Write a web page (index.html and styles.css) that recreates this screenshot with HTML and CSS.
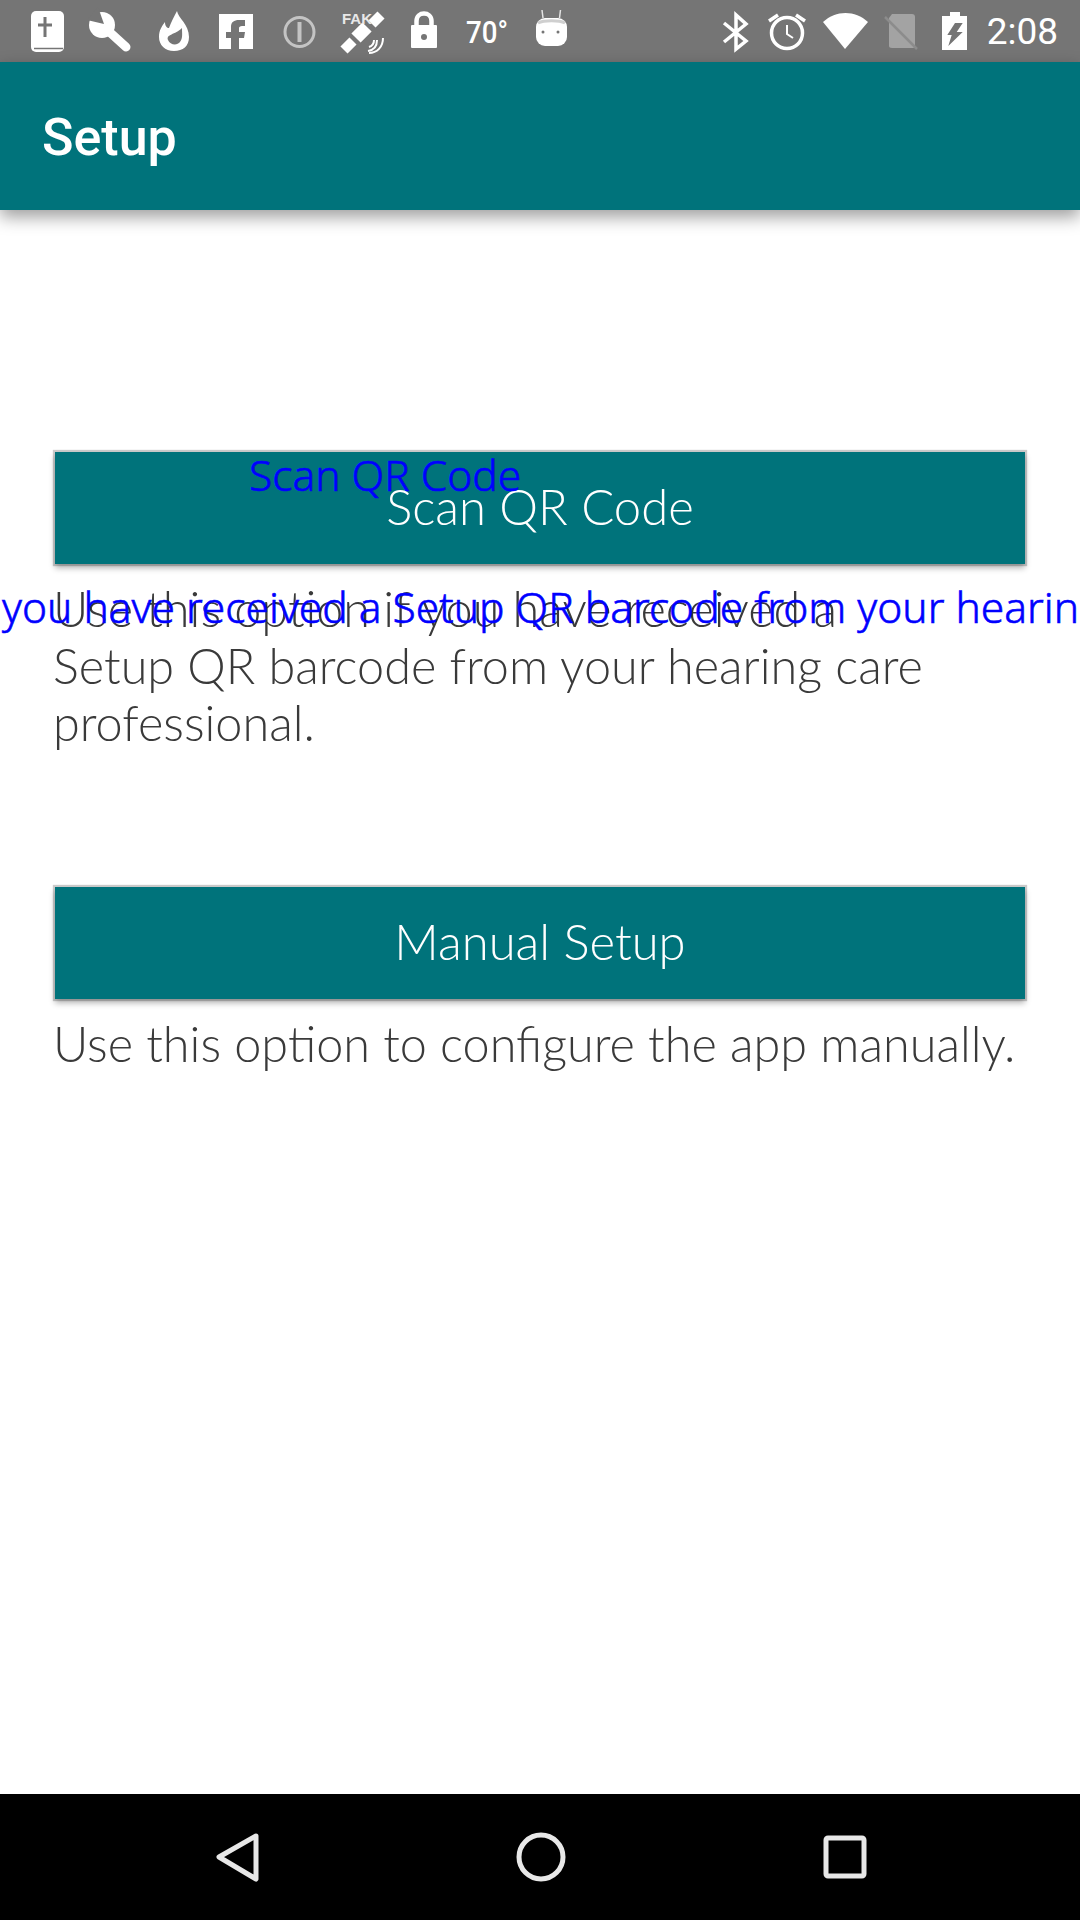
FILE: index.html
```html
<!DOCTYPE html>
<html>
	<head>
		<title>Setup</title>
		<link rel="stylesheet" href="styles.css">
	</head>
	<body>
		<div class="screen">
			<div class="statusbar">
				<div class="status-left">
					<!-- bible -->
					<svg class="icon" viewBox="0 0 63 62">
						<rect x="15" y="11" width="33" height="41" rx="5" fill="#fff"/>
						<path d="M18 48.500H47" stroke="#757575" stroke-width="1.500" fill="none"/>
						<path d="M29 17V37M22 25H36" stroke="#757575" stroke-width="3" fill="none"/>
					</svg>
					<!-- wrench -->
					<svg class="icon" viewBox="0 0 63 62">
						<circle cx="23" cy="25" r="13" fill="#fff"/>
						<path d="M25 27L47 47" stroke="#fff" stroke-width="9" stroke-linecap="round" fill="none"/>
						<path d="M25 24L8 20L19 7Z" fill="#757575"/>
					</svg>
					<!-- flame -->
					<svg class="icon" viewBox="0 0 63 62">
						<path d="M35 11C36 18 47 24 47 37C47 46 41 51 32 51C23 51 17 45 17 37C17 30 20 26 23 22C23 26 25 28 27 28C29 22 32 17 35 11Z" fill="#fff"/>
						<path d="M40 28C40 34 41 38 38 42C35 46 28 45 26 40C24 34 33 35 40 28Z" fill="#757575"/>
					</svg>
					<!-- facebook -->
					<svg class="icon" viewBox="0 0 63 62">
						<rect x="14" y="14" width="34" height="35" fill="#fff"/>
						<path d="M26 49V38H21V32H26V27C26 22 29 20 34 20H40V26H37C35 26 34 27 34 28V32H40L39 38H34V49Z" fill="#757575"/>
					</svg>
					<!-- dimmed info circle -->
					<svg class="icon" viewBox="0 0 63 62">
						<circle cx="31.500" cy="32" r="14.500" stroke="#c4c4c4" stroke-width="3" fill="none"/>
						<rect x="29.500" y="22" width="4" height="20" fill="#c4c4c4"/>
					</svg>
					<!-- fake gps -->
					<svg class="icon" viewBox="0 0 63 62">
						<path d="M41 24L50 15" stroke="#fff" stroke-width="10" fill="none"/>
						<path d="M25 38L36 27" stroke="#fff" stroke-width="13" fill="none"/>
						<path d="M13 50L22 41" stroke="#fff" stroke-width="10" fill="none"/>
						<path d="M37 51C43 50 46 46 46 40M38 47C41 46 43 44 43 40M38 53C46 53 52 47 52 38" stroke="#fff" stroke-width="2" fill="none"/>
						<text class="fake" x="11" y="24">FAK</text>
					</svg>
					<!-- lock -->
					<svg class="icon" viewBox="0 0 63 62">
						<path d="M22.500 27V21C22.500 11 37.500 11 37.500 21V27" stroke="#fff" stroke-width="4.500" fill="none"/>
						<rect x="17" y="25" width="26" height="23" rx="1" fill="#fff"/>
						<circle cx="30" cy="37" r="3" fill="#757575"/>
					</svg>
					<!-- temperature -->
					<svg class="icon" viewBox="0 0 63 62">
						<text class="temp" x="9" y="43" textLength="42" lengthAdjust="spacingAndGlyphs">70°</text>
					</svg>
					<!-- android head -->
					<svg class="icon" viewBox="0 0 63 62">
						<path d="M23 18L22 10M39.500 18L40.500 10" stroke="#e4e4e4" stroke-width="1.500" fill="none"/>
						<rect x="16" y="18" width="31" height="28" rx="9" fill="#fff"/>
						<path d="M18 23C24 20 39 20 45 23" stroke="#cfcfcf" stroke-width="3" fill="none"/>
						<circle cx="23" cy="32" r="1.500" fill="#757575"/>
						<circle cx="38" cy="32" r="1.500" fill="#757575"/>
					</svg>
				</div>
				<div class="status-right">
					<!-- bluetooth -->
					<svg class="icon icon-r" viewBox="0 0 55 62">
						<path d="M16 23L38 41L28 49V15L38 24L16 42" stroke="#fff" stroke-width="3.500" fill="none"/>
					</svg>
					<!-- alarm -->
					<svg class="icon icon-r" viewBox="0 0 55 62">
						<circle cx="24" cy="33" r="15.500" stroke="#fff" stroke-width="3.500" fill="none"/>
						<path d="M24 25V34L30 38" stroke="#fff" stroke-width="2" fill="none"/>
						<path d="M6 21L15 15M33 15L42 21" stroke="#fff" stroke-width="3.500" fill="none"/>
					</svg>
					<!-- wifi -->
					<svg class="icon icon-r" viewBox="0 0 55 62">
						<path d="M5 22C18 10 37 10 50 22L27 49Z" fill="#fff"/>
					</svg>
					<!-- no sim -->
					<svg class="icon icon-r" viewBox="0 0 55 62">
						<path d="M19 14H39C41 14 42 15 42 17V46C42 47 41 48 40 48H19C17 48 16 47 16 46V18Z" fill="#a3a3a3"/>
						<path d="M12 17L44 49" stroke="#8c8c8c" stroke-width="2.500" fill="none"/>
					</svg>
					<!-- charging battery -->
					<svg class="icon icon-r" viewBox="0 0 55 62">
						<path d="M22 12H32V16H39V50H14V16H22Z" fill="#fff"/>
						<path d="M27 23H34.700L28.700 32H34.700L20.300 46L23.700 35H19.300Z" fill="#757575"/>
					</svg>
					<span class="clock">2:08</span>
				</div>
			</div>
			<header class="appbar">Setup</header>
			<main class="content">
				<section class="option option-qr">
					<button class="option-btn">Scan QR Code</button>
					<p class="option-text">Use this option if you have received a<br>Setup QR barcode from your hearing care professional.</p>
				</section>
				<section class="option">
					<button class="option-btn">Manual Setup</button>
					<p class="option-text">Use this option to configure the app manually.</p>
				</section>
				<span class="debug debug-title">Scan QR Code</span>
				<span class="debug debug-line">you have received a Setup QR barcode from your hearing</span>
			</main>
			<nav class="navbar">
				<svg class="nav-icon" viewBox="0 0 60 60">
					<path d="M48 9L11 30L48 52Z" stroke="#e8e8e8" stroke-width="5" stroke-linejoin="round" fill="none"/>
				</svg>
				<svg class="nav-icon" viewBox="0 0 60 60">
					<circle cx="30" cy="30" r="22" stroke="#e8e8e8" stroke-width="5" fill="none"/>
				</svg>
				<svg class="nav-icon" viewBox="0 0 60 60">
					<rect x="11" y="11" width="38" height="38" rx="2" stroke="#e8e8e8" stroke-width="5" fill="none"/>
				</svg>
			</nav>
		</div>
	</body>
</html>
```

FILE: styles.css
```css
html {
	background-color: white;
}
body {
	margin: 0px;
}
.screen {
	width: 1080px;
	height: 1920px;
	display: flex;
	flex-direction: column;
	overflow: hidden;
	background-color: white;
}
.statusbar {
	height: 62px;
	flex-shrink: 0;
	display: flex;
	justify-content: space-between;
	background-color: #757575;
	padding: 0px 22px 0px 16px;
}
.status-left, .status-right {
	display: flex;
	align-items: center;
}
.icon {
	width: 63px;
	height: 62px;
	flex-shrink: 0;
}
.icon-r {
	width: 55px;
}
.fake {
	font-family: "Liberation Sans", sans-serif;
	font-size: 15px;
	font-weight: bold;
	fill: #e8e8e8;
}
.temp {
	font-family: Roboto, sans-serif;
	font-size: 32px;
	font-weight: 500;
	fill: #fff;
}
.clock {
	margin-left: 4px;
	color: white;
	font-family: Roboto, sans-serif;
	font-size: 37px;
}
.appbar {
	height: 148px;
	flex-shrink: 0;
	position: relative;
	z-index: 1;
	display: flex;
	align-items: center;
	padding: 2px 0px 0px 42px;
	box-sizing: border-box;
	background-color: #00737b;
	color: white;
	font-family: Roboto, sans-serif;
	font-size: 52px;
	font-weight: 500;
	box-shadow: 0px 7px 16px rgba(0, 0, 0, 0.38);
}
.content {
	flex: 1;
	position: relative;
	padding: 242px 54px 0px 53px;
	font-family: Lato, sans-serif;
	font-weight: 300;
}
.option-qr {
	height: 435px;
}
.option-btn {
	display: block;
	width: 970px;
	height: 112px;
	margin: 0px 0px 0px 2px;
	padding: 0px 0px 4px 0px;
	border: none;
	background-color: #00737b;
	color: white;
	font-family: Lato, sans-serif;
	font-size: 49px;
	font-weight: 300;
	box-shadow: 0px 0px 1px 2px rgba(0, 0, 0, 0.2), 0px 4px 6px rgba(0, 0, 0, 0.3);
}
.option-text {
	margin: 16px 0px 0px 0px;
	color: #3a3a3a;
	font-size: 48.600px;
	line-height: 57px;
}
.debug {
	position: absolute;
	color: #0000ff;
	font-family: "Noto Sans", sans-serif;
	font-size: 42.500px;
	line-height: 54px;
	white-space: nowrap;
	-webkit-text-stroke: 0.6px #0000ff;
}
.debug-title {
	left: 249px;
	top: 238px;
}
.debug-line {
	left: 2px;
	top: 370px;
}
.navbar {
	height: 126px;
	flex-shrink: 0;
	display: grid;
	grid-template-columns: repeat(3, 1fr);
	justify-items: center;
	align-items: center;
	padding: 0px 83px 0px 86px;
	background-color: black;
}
.nav-icon {
	width: 60px;
	height: 60px;
	margin-top: -1px;
}
```
